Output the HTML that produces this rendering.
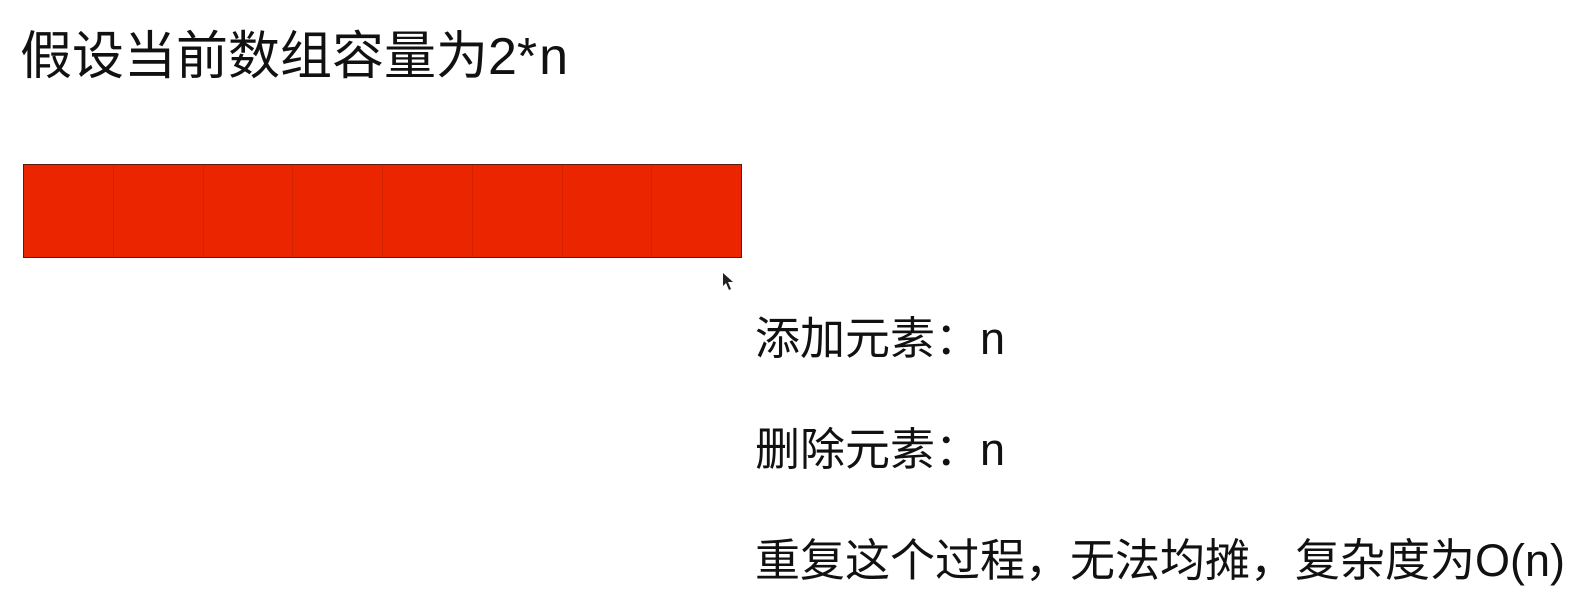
<!DOCTYPE html>
<html><head><meta charset="utf-8"><style>
body{margin:0;width:1582px;height:606px;background:#fff;overflow:hidden;position:relative;font-family:"Liberation Sans","Noto Sans CJK SC",sans-serif;color:#111}
.t{position:absolute;white-space:nowrap;line-height:1}
.bar{position:absolute;left:23px;top:164px;width:716px;height:92px;background:#ea2500;border:1px solid #5a1a10;display:flex;box-sizing:content-box}
.bar div{flex:1;border-right:1px solid #d42200}
.bar div:last-child{border-right:none}
</style></head><body>
<div class="t" style="left:20px;top:31px;font-size:52px">假设当前数组容量为2<span style="letter-spacing:2px">*</span>n</div>
<div class="bar" style="width:716px"><div></div><div></div><div></div><div></div><div></div><div></div><div></div><div></div></div>
<svg style="position:absolute;left:722px;top:272px" width="14" height="20"><path d="M1 1 L1 14 L4 11 L7 18 L9 17 L6 10 L11 10 Z" fill="#222"/></svg>
<div class="t" style="left:755px;top:316px;font-size:45px">添加元素：n</div>
<div class="t" style="left:755px;top:427px;font-size:45px">删除元素：n</div>
<div class="t" style="left:755px;top:538px;font-size:45px">重复这个过程，无法均摊，复杂度为O(n)</div>
<style>.bar{width:717px!important}</style>
</body></html>
